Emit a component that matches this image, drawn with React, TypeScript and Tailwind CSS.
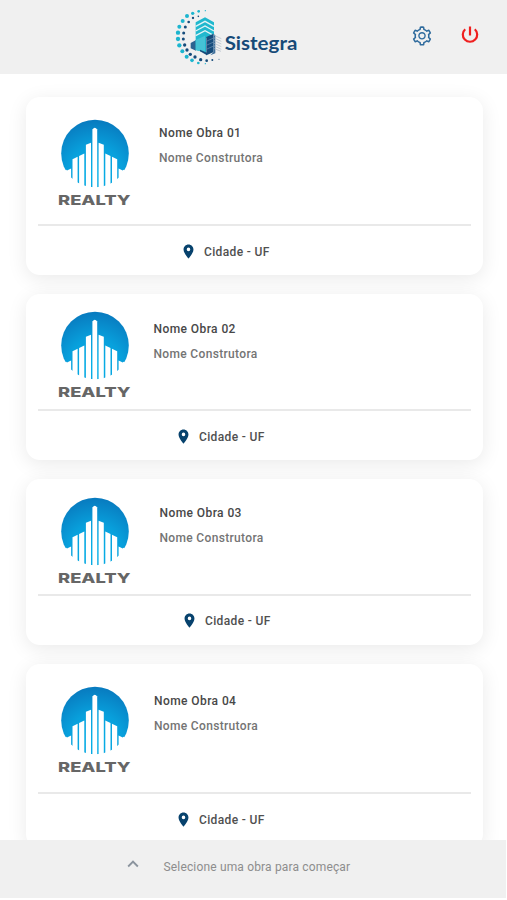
import { AiOutlineSetting } from "react-icons/ai";
import { MdKeyboardArrowUp, MdLocationOn } from "react-icons/md";

type Obra = {
  name: string;
  card: string;
  top: string;
  logo: string;
  text: string;
  city: string;
};

const obras: Obra[] = [
  { name: "Nome Obra 01", card: "h-[178px]", top: "h-[129px]", logo: "mt-[22px]", text: "ml-[27px] mt-[26px]", city: "pl-[142px] pt-[17px]" },
  { name: "Nome Obra 02", card: "h-[166px]", top: "h-[117px]", logo: "mt-[17px]", text: "ml-[21.5px] mt-[25px]", city: "pl-[137px] pt-[17px]" },
  { name: "Nome Obra 03", card: "h-[166px]", top: "h-[117px]", logo: "mt-[18px]", text: "ml-[27.5px] mt-[24px]", city: "pl-[143px] pt-[16px]" },
  { name: "Nome Obra 04", card: "h-[184px]", top: "h-[130px]", logo: "mt-[22px]", text: "ml-[22px] mt-[27px]", city: "pl-[137px] pt-[17px]" },
];

const outerDots = [
  [121, 32, 2], [101, 34, 4], [83, 40, 5], [66, 48, 6], [53, 63, 6], [43, 80, 6], [39, 98, 6.5],
  [39, 117, 6.5], [43, 136, 6.5], [52, 154, 6], [65, 170, 6], [81, 181, 5.5], [100, 189, 4], [121, 191, 2],
];
const innerDots = [
  [100, 49, 2.5], [84, 54, 3.5], [71, 66, 4], [61, 81, 4.5], [56, 99, 4.5], [55, 117, 4.5], [59, 135, 5],
  [66, 150, 5], [76, 163, 5], [90, 171, 5], [107, 179, 5], [125, 182, 4], [142, 180, 3], [162, 178, 1.5],
];

function SistegraLogo() {
  return (
    <svg viewBox="0 0 450 222" className="h-[74px] w-[150px]" aria-label="Sistegra">
      {outerDots.map(([x, y, r]) => (
        <circle key={`${x}-${y}`} cx={x} cy={y} r={r} fill="#1cb5cf" />
      ))}
      {innerDots.map(([x, y, r]) => (
        <circle key={`${x}-${y}`} cx={x} cy={y} r={r} fill="#164c7c" />
      ))}
      <path d="M77 129L93 120V152L77 145Z" fill="#2d6390" />
      <path d="M92 67L120 52L147 67V104L123 115V158L92 150Z" fill="#20b8ce" />
      <g fill="none" stroke="#e4f4f6" strokeWidth="4">
        <path d="M92 79L120 64L147 79M92 93L120 78L147 93M92 107L120 92L147 107" />
      </g>
      <path d="M92 120L120 107V157L92 150Z" fill="#45c3d5" />
      <path d="M124 111L145 101V157L124 166Z" fill="#164c7c" />
      <path d="M145 101L151 106V160L136 166L145 157Z" fill="#3d6f9b" />
      <path d="M105 149L126 158V166L105 154Z" fill="#164c7c" />
      <g fill="none" stroke="#b8c2cc" strokeWidth="2.5">
        <path d="M148 106L169 116M148 114L169 124M148 122L169 132M148 130L169 140M148 138L169 148M148 146L168 154" />
      </g>
      <path d="M124 124L148 113M124 136L148 125M124 148L148 137" stroke="#6d93b2" strokeWidth="2" />
      <text
        x="179"
        y="151"
        textLength="218"
        lengthAdjust="spacingAndGlyphs"
        className="fill-[#164a78] font-['Lato',sans-serif] text-[59px] font-bold"
      >
        Sistegra
      </text>
    </svg>
  );
}

function PowerIcon() {
  return (
    <svg viewBox="0 0 22 22" className="h-[22px] w-[22px]" fill="none" stroke="#ef2020" strokeWidth="2.2">
      <path d="M11 2.6V11.6M6.2 5.2A7.2 7.2 0 1 0 15.8 5.2" />
    </svg>
  );
}

function RealtyLogo({ id, className }: { id: string; className: string }) {
  return (
    <svg viewBox="0 0 74 88" className={`h-[88px] w-[74px] shrink-0 ${className}`} aria-label="Realty">
      <defs>
        <radialGradient id={`${id}-sky`} cx="0.5" cy="0.8" r="0.82">
          <stop offset="0" stopColor="#06b2e9" />
          <stop offset="0.5" stopColor="#08a0dc" />
          <stop offset="1" stopColor="#0878bd" />
        </radialGradient>
      </defs>
      <circle cx="37" cy="34.5" r="33.8" fill={`url(#${id}-sky)`} />
      <g fill="#fff">
        <path d="M0 52L5 52.4L8.2 50.8L9 51.6L13.1 49.4V70H0Z" />
        <path d="M14.5 40.2L19.6 37.8V70H14.5Z" />
        <path d="M21.1 37L26.3 34.6V70H21.1Z" />
        <path d="M27.9 25.8L33 23.8V70H27.9Z" />
        <path d="M34.4 10.4Q36.8 7 39.2 10.4V70H34.4Z" />
        <path d="M40.6 23.8L45.8 25.8V70H40.6Z" />
        <path d="M47.3 34.6L52.5 37V70H47.3Z" />
        <path d="M54 37.8L59.2 40.2V70H54Z" />
        <path d="M60.6 49.4L64.7 51.6L65.5 50.8L69 52.4L74 52V70H60.6Z" />
      </g>
      <text
        x="0"
        y="85.5"
        textLength="72.5"
        lengthAdjust="spacingAndGlyphs"
        className="fill-[#666666] font-['Inter',sans-serif] text-[13.5px] font-extrabold"
      >
        REALTY
      </text>
    </svg>
  );
}

function ObraCard({ obra, id }: { obra: Obra; id: string }) {
  return (
    <article className={`flex shrink-0 flex-col rounded-[14px] bg-white px-3 shadow-[0_4px_20px_rgba(0,0,0,0.085)] ${obra.card}`}>
      <div className={`flex border-b-2 border-[#e9e9e9] pl-5 ${obra.top}`}>
        <RealtyLogo id={id} className={obra.logo} />
        <div className={`flex flex-col gap-[5px] text-[12px] font-medium ${obra.text}`}>
          <h2 className="h-5 leading-5 tracking-[0.42px] text-[#484848]">{obra.name}</h2>
          <p className="h-5 leading-5 tracking-[0.33px] text-[#747474]">Nome Construtora</p>
        </div>
      </div>
      <div className={`flex items-start gap-[7px] ${obra.city}`}>
        <MdLocationOn className="h-[17px] w-[17px] text-[#07426d]" />
        <span className="text-[12px] leading-[18px] font-medium tracking-[0.36px] whitespace-nowrap text-[#505050]">Cidade - UF</span>
      </div>
    </article>
  );
}

export default function App() {
  return (
    <div className="flex h-[900px] w-[507px] flex-col overflow-hidden bg-white font-['Roboto',sans-serif]">
      <header className="flex h-[74px] shrink-0 bg-[#f0f0f0] pl-[165px]">
        <SistegraLogo />
        <div className="ml-[96px] flex items-start gap-[25px]">
          <button aria-label="Configurações" className="mt-[25px]">
            <AiOutlineSetting className="h-[22px] w-[22px] text-[#2f6b9d]" />
          </button>
          <button aria-label="Sair" className="mt-[23.5px] ml-[0.5px]">
            <PowerIcon />
          </button>
        </div>
      </header>
      <main className="flex h-[766px] shrink-0 flex-col gap-[19px] overflow-hidden pt-[23px] pr-6 pl-[26px]">
        {obras.map((obra, i) => (
          <ObraCard key={obra.name} obra={obra} id={`obra-${i}`} />
        ))}
      </main>
      <footer className="flex h-[58px] w-[506px] shrink-0 items-start bg-[#f0f0f0] pl-[122px]">
        <MdKeyboardArrowUp className="mt-[13px] h-[22px] w-[22px] text-[#8b949e]" />
        <span className="mt-[17px] ml-[19.5px] text-[12px] leading-5 tracking-[0.16px] text-[#8d8d8d]">
          Selecione uma obra para começar
        </span>
      </footer>
    </div>
  );
}
